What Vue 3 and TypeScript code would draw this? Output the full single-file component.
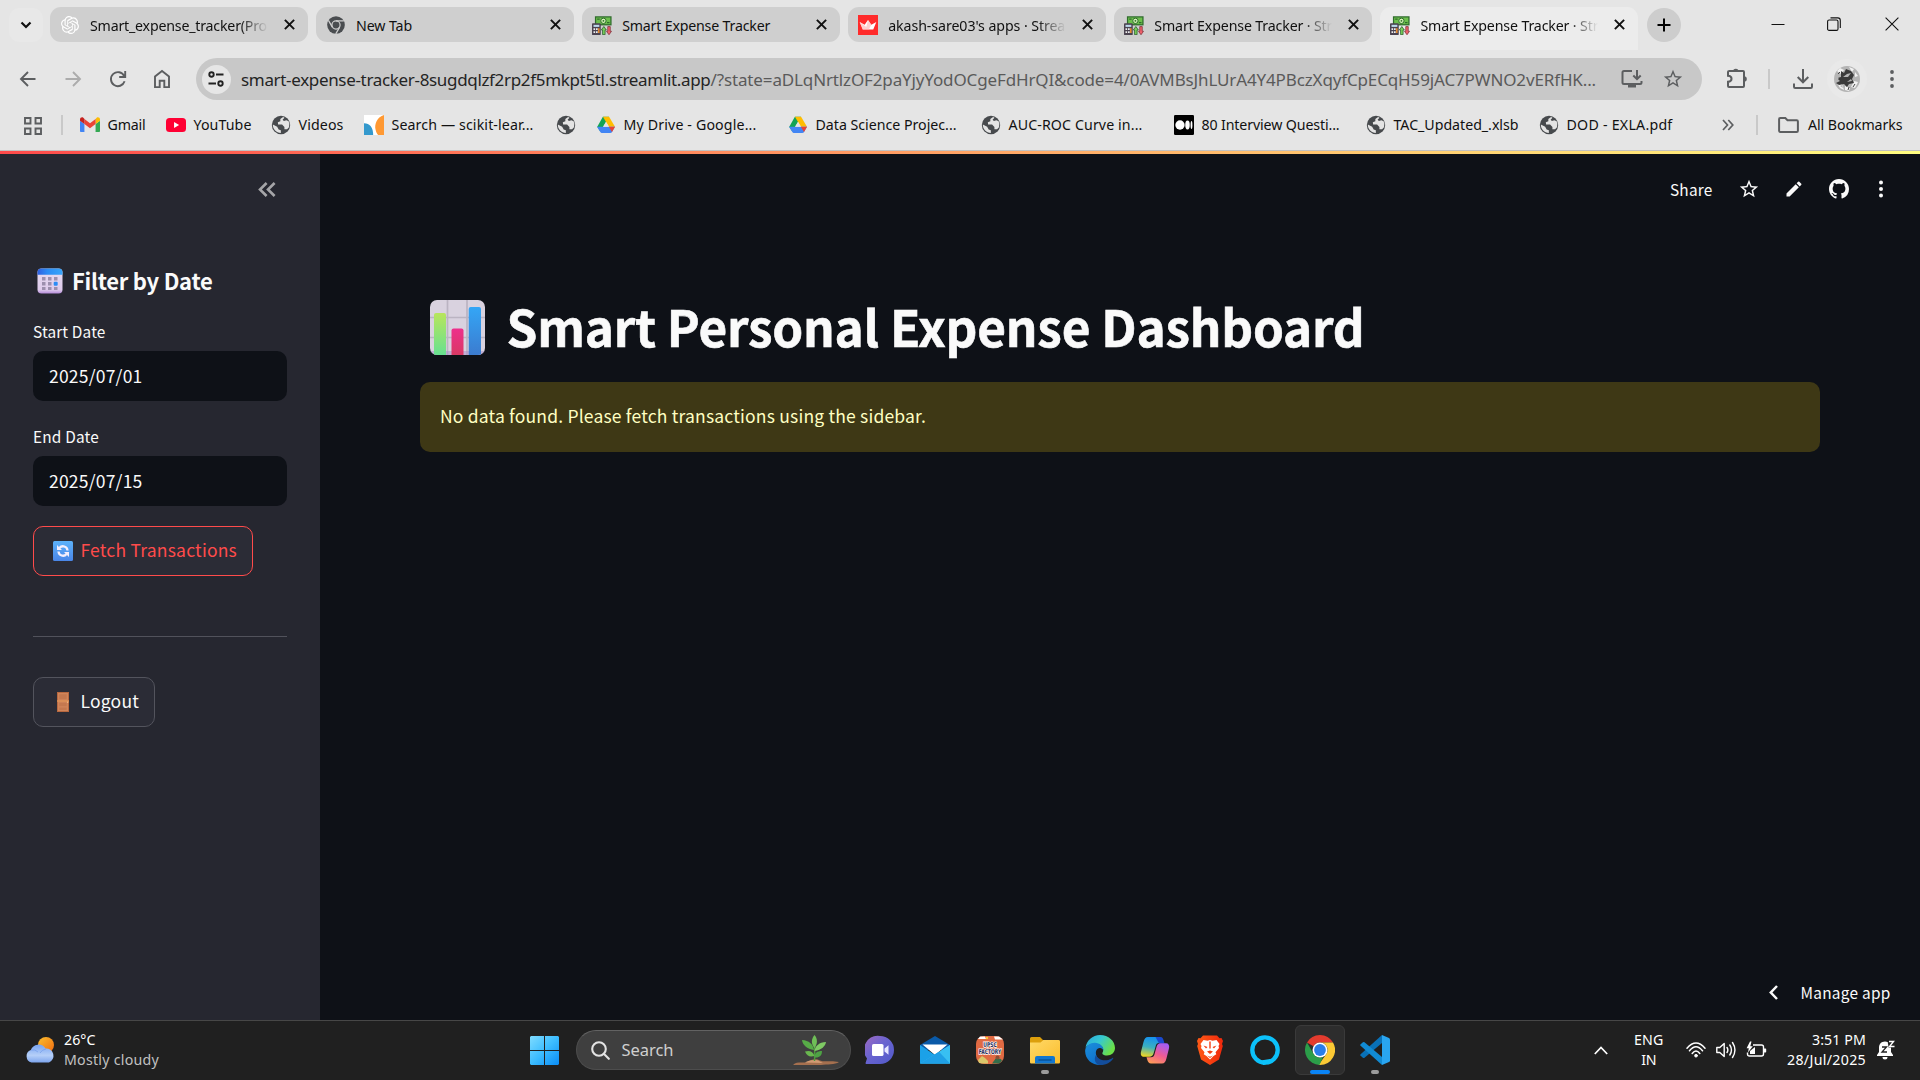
<script setup lang="ts">
interface Tab { icon: string; title: string; width: number; faded: boolean; active?: boolean }
interface Bookmark { icon: string; title: string; width: number; slot: number }
interface TaskApp { name: string; state?: 'open' | 'focused' }

/* Spreads a line of text over the given advance width. */
const vFit = {
  mounted(el: HTMLElement, binding: { value: number }) {
    const count = (el.textContent || '').length
    const natural = el.getBoundingClientRect().width
    if (count > 0) el.style.letterSpacing = `${((binding.value - natural) / count).toFixed(4)}px`
  },
}

const tabs: Tab[] = [
  { icon: 'openai', title: 'Smart_expense_tracker(Pro', width: 177, faded: true },
  { icon: 'chromeGrey', title: 'New Tab', width: 56, faded: false },
  { icon: 'money', title: 'Smart Expense Tracker', width: 148, faded: false },
  { icon: 'crown', title: "akash-sare03's apps · Strea", width: 177, faded: true },
  { icon: 'money', title: 'Smart Expense Tracker · Str', width: 178, faded: true },
  { icon: 'money', title: 'Smart Expense Tracker · Str', width: 178, faded: true, active: true },
]

const bookmarks: Bookmark[] = [
  { icon: 'gmail', title: 'Gmail', width: 38, slot: 86 },
  { icon: 'youtube', title: 'YouTube', width: 58, slot: 105 },
  { icon: 'globe', title: 'Videos', width: 45, slot: 93 },
  { icon: 'scikit', title: 'Search — scikit-lear...', width: 142, slot: 192 },
  { icon: 'globe', title: '', width: 0, slot: 40 },
  { icon: 'drive', title: 'My Drive - Google...', width: 133, slot: 192 },
  { icon: 'drive', title: 'Data Science Projec...', width: 141, slot: 193 },
  { icon: 'globe', title: 'AUC-ROC Curve in...', width: 134, slot: 193 },
  { icon: 'medium', title: '80 Interview Questi...', width: 138, slot: 192 },
  { icon: 'globe', title: 'TAC_Updated_.xlsb', width: 125, slot: 173 },
  { icon: 'globe', title: 'DOD - EXLA.pdf', width: 106, slot: 180 },
]

const apps: TaskApp[] = [
  { name: 'chat' }, { name: 'mail' }, { name: 'upsc' }, { name: 'folder', state: 'open' },
  { name: 'edge' }, { name: 'copilot' }, { name: 'brave' }, { name: 'alexa' },
  { name: 'chrome', state: 'focused' }, { name: 'vscode', state: 'open' },
]

const icons: Record<string, string> = {
  openai: '<path transform="translate(1.2 1.2) scale(.9)" fill="#fff" d="M22.2819 9.8211a5.9847 5.9847 0 0 0-.5157-4.9108 6.0462 6.0462 0 0 0-6.5098-2.9A6.0651 6.0651 0 0 0 4.9807 4.1818a5.9847 5.9847 0 0 0-3.9977 2.9 6.0462 6.0462 0 0 0 .7427 7.0966 5.98 5.98 0 0 0 .511 4.9107 6.051 6.051 0 0 0 6.5146 2.9001A5.9847 5.9847 0 0 0 13.2599 24a6.0557 6.0557 0 0 0 5.7718-4.2058 5.9894 5.9894 0 0 0 3.9977-2.9001 6.0557 6.0557 0 0 0-.7475-7.0729zm-9.022 12.6081a4.4755 4.4755 0 0 1-2.8764-1.0408l.1419-.0804 4.7783-2.7582a.7948.7948 0 0 0 .3927-.6813v-6.7369l2.02 1.1686a.071.071 0 0 1 .038.052v5.5826a4.504 4.504 0 0 1-4.4945 4.4944zm-9.6607-4.1254a4.4708 4.4708 0 0 1-.5346-3.0137l.142.0852 4.783 2.7582a.7712.7712 0 0 0 .7806 0l5.8428-3.3685v2.3324a.0804.0804 0 0 1-.0332.0615L9.74 19.9502a4.4992 4.4992 0 0 1-6.1408-1.6464zM2.3408 7.8956a4.485 4.485 0 0 1 2.3655-1.9728V11.6a.7664.7664 0 0 0 .3879.6765l5.8144 3.3543-2.0201 1.1685a.0757.0757 0 0 1-.071 0l-4.8303-2.7865A4.504 4.504 0 0 1 2.3408 7.872zm16.5963 3.8558L13.1038 8.364 15.1192 7.2a.0757.0757 0 0 1 .071 0l4.8303 2.7913a4.4944 4.4944 0 0 1-.6765 8.1042v-5.6772a.79.79 0 0 0-.407-.667zm2.0107-3.0231l-.142-.0852-4.7735-2.7818a.7759.7759 0 0 0-.7854 0L9.409 9.2297V6.8974a.0662.0662 0 0 1 .0284-.0615l4.8303-2.7866a4.4992 4.4992 0 0 1 6.6802 4.66zM8.3065 12.863l-2.02-1.1638a.0804.0804 0 0 1-.038-.0567V6.0742a4.4992 4.4992 0 0 1 7.3757-3.4537l-.142.0805L8.704 5.459a.7948.7948 0 0 0-.3927.6813zm1.0976-2.3654l2.602-1.4998 2.6069 1.4998v2.9994l-2.5974 1.4997-2.6067-1.4997Z"/>',
  chromeGrey: '<circle cx="12" cy="12" r="10.6" fill="#4a4d50"/><circle cx="12" cy="12" r="4.9" fill="#4a4d50" stroke="#cfcfcf" stroke-width="1.5"/><path d="M12 6.9h9.4M7.6 14.6L2.9 6.4M16.4 14.6l-4.7 8.1" stroke="#cfcfcf" stroke-width="1.5"/>',
  money: '<path d="M3.5 1.5h20v11h-20z" fill="#2f6b2c"/><path d="M5 3h17v8H5z" fill="#6cbf4c"/><path d="M6.2 4.2h3v1.5h-3zM18 8.5h3V10h-3z" fill="#2f6b2c"/><circle cx="13.7" cy="7" r="3.2" fill="#d5f5b5" stroke="#2f6b2c" stroke-width="1.2"/><circle cx="13.7" cy="7" r="1.1" fill="#2f6b2c"/><rect x="0" y="10" width="10.5" height="14" rx="1" fill="#4b4350"/><path d="M1.8 11.8h7v2.5h-7z" fill="#bcd7ea"/><path d="M1.8 16h2v2h-2zM4.8 16h2v2h-2zM1.8 19.5h2v2h-2zM4.8 19.5h2v2h-2z" fill="#eee"/><path d="M7.3 16h1.8v5.5H7.3z" fill="#f5912d"/><path d="M11.2 18l3-4.2 3 4.2h-1.5v5.6h-3V18z" fill="#79d05a" stroke="#27592a" stroke-width=".9"/><path d="M17.4 19.5l3 4.2 3-4.2h-1.5v-5.6h-3v5.6z" fill="#f0606a" stroke="#7c2f38" stroke-width=".9"/>',
  crown: '<path d="M0 0h24v24H0z" fill="#ff2b2b"/><path d="M2 8.5l6 3.2L12 6l4 5.7 6-3.2-3.7 8.8H5.7z" fill="#fff"/><path d="M12 6l4 5.7-3 5.6H5.7L2 8.5l8 6z" fill="#ffb8b8" opacity=".65"/>',
  gmail: '<path d="M1.4 20.5h3.9v-9.6L0 6.8v12.3c0 .8.6 1.4 1.4 1.4z" fill="#4285f4"/><path d="M18.7 20.5h3.9c.8 0 1.4-.6 1.4-1.4V6.8l-5.3 4.1z" fill="#34a853"/><path d="M18.7 4.9v6L24 6.8V5.2c0-2.1-2.3-3.2-4-2z" fill="#fbbc04"/><path d="M5.3 10.9v-6L12 9.8l6.7-4.9v6L12 16z" fill="#ea4335"/><path d="M0 5.2v1.6l5.3 4.1v-6L4 3.2C2.300 2 0 3.100 0 5.200z" fill="#c5221f"/>',
  youtube: '<rect x="0" y="3.500" width="24" height="17" rx="4.200" fill="#ff0033"/><path d="M9.700 8.500v7l6-3.500z" fill="#fff"/>',
  globe: '<circle cx="12" cy="12" r="11" fill="#474a4d"/><path d="M14.500 2.300l-3.300 2.500v2.600l-3 1.200.3 2.700h4.800l2.800 3.200v2.500h3.200l2.300-2.300a10 10 0 0 0-.4-7.100l-2.800-1.400-2.900.9-1.600-1.500 2.300-2.200z" fill="#e4e4e4"/><path d="M2.200 11.500l5.200 2.600 1.800 3.300 2.600.8v3.300C6.500 21.500 2.200 17.500 2.200 11.500z" fill="#e4e4e4"/>',
  scikit: '<path d="M0 0h24v24H0z" fill="#fff"/><path d="M0 10c7 0 11 5 11 14H0z" fill="#3499cd"/><path d="M24 0C16 2 12 11 14 18c.5 2.600 1.500 4.500 3 6h7z" fill="#ff9933"/>',
  drive: '<path d="M8.300 2h7.400L8.900 13.700 5.200 20 1.500 14z" fill="#12a454"/><path d="M15.700 2l7.100 12.200h-7.400L8.300 2z" fill="#ffbd00"/><path d="M5.200 20.500L1.200 14.200h21.600l-3.600 6.300c-.5.800-1 1-1.800 1H7c-.8 0-1.400-.3-1.800-1z" fill="#4285f4"/><path d="M12 8.200l-3.600 6h7.200z" fill="#e4e4e4"/><path d="M15.400 14.200h7.400l-3.600 6.300z" fill="#ea4335"/>',
  medium: '<rect width="24" height="24" rx="1.500" fill="#000"/><circle cx="7.200" cy="12" r="5.600" fill="#fff"/><ellipse cx="16.200" cy="12" rx="2.700" ry="5.300" fill="#fff"/><ellipse cx="21" cy="12" rx="1.100" ry="4.700" fill="#fff"/>',
  chat: '<defs><linearGradient id="chatG" x1="0" y1="0" x2="1" y2="1"><stop offset="0" stop-color="#a06ac0"/><stop offset=".45" stop-color="#6a64d0"/><stop offset="1" stop-color="#5059c9"/></linearGradient></defs><path d="M15 1a14 14 0 0 1 0 28H1.500c-1 0-1.200-.8-.8-1.600L2 23.500A14 14 0 0 1 15 1z" fill="url(#chatG)"/><rect x="7" y="9" width="11.500" height="12" rx="1.600" fill="#fff"/><path d="M19.500 13.500l4-3.300v9.600l-4-3.300z" fill="#e6e6ff"/>',
  mail: '<path d="M0 10L15 1l15 9v5H0z" fill="#0a5aa8"/><path d="M2.500 9.500h25L15 20z" fill="#fff"/><path d="M0 10l15 10 15-10v18.500H0z" fill="#1ba1e8"/><path d="M0 28.500L30 10v18.500z" fill="#38bff2"/><path d="M0 28.500l19-11.700 11 11.700z" fill="#1f9fe6"/>',
  upsc: '<rect x="1" y="1" width="28" height="28" rx="8" fill="#e06a43"/><path d="M5 1.500h5l1 2.500H3zM19 1.500h5l4 3h-8z" fill="#fff"/><circle cx="12" cy="3" r="1.200" fill="#ffc93c"/><text x="15" y="11.500" font-size="6.500" font-weight="700" text-anchor="middle" font-family="DejaVu Sans, sans-serif" fill="#232b5a" stroke="#fff" stroke-width="1.500" paint-order="stroke" textLength="13.500" lengthAdjust="spacingAndGlyphs">UPSC</text><text x="15" y="19" font-size="6.500" font-weight="700" text-anchor="middle" font-family="DejaVu Sans, sans-serif" fill="#232b5a" stroke="#fff" stroke-width="1.500" paint-order="stroke" textLength="22.500" lengthAdjust="spacingAndGlyphs">FACTORY</text><path d="M4 28l-1-3 4-4 3 2 3 3v2.500H7z" fill="#d9c76b"/><path d="M17 28.500l4-5.500 5 1 1 2-3 2.500z" fill="#336d4b"/><circle cx="22.500" cy="22.500" r="2" fill="#8b4f35"/>',
  folder: '<defs><linearGradient id="fdG" x1="0" y1="0" x2="1" y2="1"><stop offset="0" stop-color="#ffd968"/><stop offset="1" stop-color="#fbbd2c"/></linearGradient></defs><path d="M0 3.500Q0 2 1.500 2H10l3 3h15.500Q30 5 30 6.500V12H0z" fill="#dd9f0c"/><path d="M0 7.500h10.500l3-2.500H28.500Q30 5 30 6.500v20.800q0 1.200-1.200 1.200H1.200Q0 28.500 0 27.300z" fill="url(#fdG)"/><path d="M5 28.500V23q0-2 2-2h16q2 0 2 2v5.500z" fill="#1376cf"/><path d="M9 25h12" stroke="#08549c" stroke-width="1.500" stroke-linecap="round"/>',
  edge: '<defs><linearGradient id="edA" x1="0" y1="0" x2="1" y2=".5"><stop offset="0" stop-color="#2aa7df"/><stop offset=".5" stop-color="#36c8d0"/><stop offset="1" stop-color="#6be048"/></linearGradient><linearGradient id="edB" x1="0" y1="0" x2=".7" y2="1"><stop offset="0" stop-color="#1b8fdc"/><stop offset="1" stop-color="#0d6cc9"/></linearGradient></defs><path d="M.5 13C1.500 5.500 7.500 0 15 0c8.600 0 15 6 15 13 0 4.500-3.500 7.500-8 7.500-4 0-5.300-1.700-4.300-3.200 1.300-2 .7-7.300-5.700-8.300C7 8.300 2 10 .5 13z" fill="url(#edA)"/><path d="M.2 15C.8 10.500 5.500 7.500 10 7.700c5 .2 9 3.800 8.300 7.800-.4-1.700-2-2.800-3.800-2.500-3 .5-4.500 3.600-3.200 7.500 1.500 4.300 6.500 7 12 5.800C20.500 29 17.500 30 15 30 6.500 30-.5 23.500.2 15z" fill="url(#edB)"/><path d="M11 19.800c1.200 4 6 6 10.500 5.400 2.700-.4 4.500-1.500 6-2.300.6-.3 1 .2.600.8C25.500 27.500 20.500 30.200 15 30c-5-.4-6.500-6.500-4-10.200z" fill="#134d9b"/>',
  copilot: '<defs><linearGradient id="cpA" x1=".4" y1="0" x2=".2" y2="1"><stop offset="0" stop-color="#1692ed"/><stop offset=".5" stop-color="#3bb0c0"/><stop offset="1" stop-color="#f5d820"/></linearGradient><linearGradient id="cpB" x1=".7" y1="0" x2=".2" y2="1"><stop offset="0" stop-color="#a45cf5"/><stop offset=".5" stop-color="#ee5b93"/><stop offset="1" stop-color="#ff9d55"/></linearGradient></defs><path d="M8 2h11c2 0 3 1.500 3.500 3l1 3H19c-2 0-2.800 1-3.300 3l-2 7c-.8 2.500-2 3.700-4.300 3.700H4c-2.500 0-3.700-2-3-5L3.500 7C4.500 3.500 5.500 2 8 2z" fill="url(#cpA)"/><path d="M14 2h6.500c2 0 2.500 1.500 3 3l1 3.500H19L15.500 2z" fill="#1a49cf"/><path d="M22 28.500H11c-2 0-3-1.500-3.500-3l-1-3.300H11c2.200 0 3-1.200 3.500-3l2-7.200C17.300 9.500 18.300 8.300 20.600 8.300H26c2.500 0 3.700 2 3 5l-2.500 10c-1 3.700-2 5.200-4.500 5.200z" fill="url(#cpB)"/>',
  brave: '<defs><linearGradient id="brG"><stop offset="0" stop-color="#ff5a16"/><stop offset="1" stop-color="#f0280c"/></linearGradient></defs><path d="M8 .5h14l2.500 2.700 2-.2L28 6l-1 3 .8 2L24 24.500 15 30 6 24.500 2.200 11 3 9 2 6l1.500-3 2 .2z" fill="url(#brG)"/><path d="M8.500 5l4 .8 2.500-.8 2.500.8 4-.8 3 4-1 2 .5 2-3.500 4.300.8 2-2.800 1.700L15 24.500 11.500 21l-2.800-1.700.8-2L6 13l.5-2-1-2z" fill="#fff"/><path d="M8.500 10.500l4 1.500-1.500 1.500zM21.500 10.500l-4 1.500 1.500 1.500zM12 16.500l3-1 3 1-3 2.500zM14.300 6.500h1.400v7h-1.400z" fill="#f63e12"/><path d="M12 20.500l3 1.200 3-1.200-3 2.500z" fill="#f63e12"/>',
  alexa: '<circle cx="15" cy="15" r="12.700" fill="none" stroke="#0cc1fa" stroke-width="4.300"/><path d="M12.300 25.200q1 .8.700 2v2.800h1q5.500-2 8.500-5l-2.500-1z" fill="#0cc1fa"/><path d="M6 25.300q4 1.700 6.500 2.200v2.300z" fill="#0cc1fa"/>',
  chrome: '<path d="M15 0c5.600 0 10.400 3 13 7.500H15a7.500 7.500 0 0 0-6.500 3.700L2 7.500A15 15 0 0 1 15 0z" fill="#e33b2e"/><path d="M28 7.500A15 15 0 0 1 15 30l-1.500-.1 8-11.100A7.500 7.500 0 0 0 15 7.500z" fill="#fcc934"/><path d="M2 7.500l6.500 11.300A7.500 7.500 0 0 0 18 21.900L14.500 30A15 15 0 0 1 2 7.500z" fill="#2b9e49"/><circle cx="15" cy="15" r="7.500" fill="#fff"/><circle cx="15" cy="15" r="5.900" fill="#2a7de9"/>',
  vscode: '<path d="M22 0l7 3q1 .5 1 1.500V25.500q0 1-1 1.500l-7 3z" fill="#29a5f0"/><path d="M22 0v8L4.500 22.700q-.8.600-1.600 0L.6 20.800q-.8-.8 0-1.600z" fill="#0971b8"/><path d="M22 30v-8L4.500 7.300q-.8-.6-1.600 0L.6 9.200q-.8.800 0 1.600z" fill="#118bd4"/>',
}
</script>

<template>
  <div class="screen">
    <header class="browser">
      <div class="strip">
        <div class="tab-menu"><svg width="12" height="12" viewBox="0 0 12 12"><path d="M1.500 3.500L6 8l4.500-4.500" fill="none" stroke="#111" stroke-width="2.200"/></svg></div>
        <div class="tabs">
          <div v-for="(t, i) in tabs" :key="i" class="tab" :class="{ active: t.active }">
            <svg class="fav" viewBox="0 0 24 24" v-html="icons[t.icon]"></svg>
            <div class="tab-title" :class="{ faded: t.faded }"><span v-fit="t.width">{{ t.title }}</span></div>
            <svg class="tab-close" viewBox="0 0 10 10"><path d="M.8.8l8.400 8.400M9.200.8L.8 9.200" stroke="#111" stroke-width="1.800"/></svg>
          </div>
        </div>
        <div class="new-tab"><svg width="14" height="14" viewBox="0 0 14 14"><path d="M7 .5v13M.5 7h13" stroke="#000" stroke-width="2"/></svg></div>
        <div class="win">
          <svg width="14" height="14" viewBox="0 0 14 14"><path d="M.5 7.500h13" stroke="#111"/></svg>
          <svg width="14" height="14" viewBox="0 0 14 14" fill="none" stroke="#111" stroke-width="1.100"><rect x=".6" y="3" width="10.400" height="10.400" rx="1.500"/><path d="M3.500.9h7.300a2.500 2.500 0 0 1 2.500 2.500v7.500"/></svg>
          <svg width="14" height="14" viewBox="0 0 14 14"><path d="M.6.6l12.800 12.800M13.400.6L.6 13.400" stroke="#111" stroke-width="1.100"/></svg>
        </div>
      </div>

      <div class="toolbar">
        <div class="nav">
          <svg width="20" height="20" viewBox="0 0 20 20" fill="none" stroke="#5c5e60" stroke-width="1.900"><path d="M17.500 10H4M10 3l-7 7 7 7"/></svg>
          <svg width="20" height="20" viewBox="0 0 20 20" fill="none" stroke="#acacac" stroke-width="1.900"><path d="M2.500 10H16M10 3l7 7-7 7"/></svg>
          <svg width="20" height="20" viewBox="0 0 20 20" fill="none" stroke="#5c5e60" stroke-width="1.900"><path d="M16.600 12.300A7 7 0 1 1 16.200 7M17.200 2v6h-6"/></svg>
          <svg width="20" height="20" viewBox="0 0 20 20" fill="none" stroke="#5c5e60" stroke-width="1.900"><path d="M3 18.100V7.500L10 2l7 5.500v10.600h-4.700v-6.300H7.700v6.300z"/></svg>
        </div>
        <div class="omnibox">
          <div class="site"><svg width="18" height="18" viewBox="0 0 18 18" fill="none" stroke="#222" stroke-width="1.900"><circle cx="4.500" cy="4.500" r="2.200"/><path d="M9 4.500h7.500M1.500 13.500H9"/><circle cx="13.500" cy="13.500" r="2.200"/></svg></div>
          <div class="url"><span v-fit="469.500" class="host">smart-expense-tracker-8sugdqlzf2rp2f5mkpt5tl.streamlit.app</span><span v-fit="885.500" class="path">/?state=aDLqNrtlzOF2paYjyYodOCgeFdHrQI&amp;code=4/0AVMBsJhLUrA4Y4PBczXqyfCpECqH59jAC7PWNO2vERfHK...</span></div>
          <svg class="install" width="22" height="20" viewBox="0 0 22 20" fill="none" stroke="#5c5e60" stroke-width="2"><path d="M11 2H3a1.500 1.500 0 0 0-1.500 1.500v10A1.500 1.500 0 0 0 3 15h16a1.500 1.500 0 0 0 1.500-1.500V12M16 1v9M12.300 6.500L16 10.200l3.700-3.700"/><path d="M7 15h8v3.500H7z" fill="#5c5e60" stroke="none"/></svg>
          <svg class="fav-star" width="22" height="22" viewBox="0 0 24 24"><path fill="#5c5e60" d="M22 9.240l-7.190-.62L12 2 9.190 8.630 2 9.240l5.460 4.730L5.820 21 12 17.270 18.180 21l-1.630-7.030L22 9.240zM12 15.400l-3.760 2.270 1-4.280-3.320-2.880 4.380-.38L12 6.100l1.710 4.040 4.380.38-3.320 2.880 1 4.280L12 15.400z"/></svg>
        </div>
        <div class="tools">
          <svg class="puzzle" width="22" height="22" viewBox="0 0 22 22"><path d="M2.500 4h5M12.500 4H17a1 1 0 0 1 1 1v14a1 1 0 0 1-1 1H3a1 1 0 0 1-1-1v-4.300c4.700-.3 4.700-5.700 0-6V5a1 1 0 0 1 1-1z" fill="none" stroke="#5c5e60" stroke-width="2"/><path d="M7 4.500a2.800 2.800 0 0 1 5.600 0zM18 9.200a2.800 2.800 0 0 1 0 5.600z" fill="#5c5e60"/></svg>
          <i class="vr"></i>
          <svg class="download" width="20" height="20" viewBox="0 0 20 20" fill="none" stroke="#5c5e60" stroke-width="2"><path d="M10 0v13M4.700 8L10 13.300 15.300 8M1 14.500v3.300a1.200 1.200 0 0 0 1.200 1.200h15.600a1.200 1.200 0 0 0 1.200-1.200v-3.300"/></svg>
          <div class="avatar"><svg width="26" height="26" viewBox="0 0 26 26"><circle cx="13" cy="13" r="13" fill="#b4b4b4"/><path d="M3 5l3-3 4 2-3 4zM15 1l5 2-2 3zM20 15l4 1-3 6-4-1zM3 17l5 1 2 6-4-2zM11 20l5 2-1 3-4-1zM21 6l3 4-3 1z" fill="#f2f2f2"/><path d="M7 5l3 2 2-4 5 2 3 4-2 4 2 4-5 1-2 3-3-3-5 1-3-2 4-2-3-3 4-1z" fill="#3a3a3a"/><path d="M9 11l4-3 4-1-3 4zM13 16l4-3 1 2zM2 10l3 2-2 2zM6 20l2-1 1 3z" fill="#b5b5b5"/><path d="M4 8l2-2M19 21l2-3M14 24l1-3" stroke="#444" stroke-width="1"/></svg></div>
          <svg class="dots" width="4" height="20" viewBox="0 0 4 20" fill="#5c5e60"><circle cx="2" cy="3" r="1.900"/><circle cx="2" cy="10" r="1.900"/><circle cx="2" cy="17" r="1.900"/></svg>
        </div>
      </div>

      <div class="bookbar">
        <svg class="grid" width="18" height="18" viewBox="0 0 18 18" fill="none" stroke="#5c5e60" stroke-width="1.900"><path d="M1 1h5.500v5.500H1zM11.500 1H17v5.500h-5.500zM1 11.500h5.500V17H1zM11.500 11.500H17V17h-5.500z"/></svg>
        <i class="vr"></i>
        <div class="marks">
          <div v-for="(b, i) in bookmarks" :key="i" class="mark" :style="{ width: b.slot + 'px' }">
            <svg width="20" height="20" viewBox="0 0 24 24" v-html="icons[b.icon]"></svg>
            <span v-if="b.title" v-fit="b.width">{{ b.title }}</span>
          </div>
        </div>
        <svg class="more" width="12" height="12" viewBox="0 0 12 12" fill="none" stroke="#5c5e60" stroke-width="1.700"><path d="M1 1l4.500 5L1 11M6.300 1l4.500 5-4.500 5"/></svg>
        <i class="vr second"></i>
        <svg class="all-icon" width="21" height="16" viewBox="0 0 21 16" fill="none" stroke="#5c5e60" stroke-width="2"><path d="M1.100 2.300q0-1.200 1.200-1.200h5l2.200 2.200h9.200q1.200 0 1.200 1.200v9.200q0 1.200-1.200 1.200H2.300q-1.200 0-1.200-1.200z"/></svg>
        <span v-fit="94.500" class="all">All Bookmarks</span>
      </div>
    </header>

    <div class="rainbow"></div>

    <main class="app">
      <aside class="sidebar">
        <svg class="collapse" width="18" height="15" viewBox="0 0 18 15" fill="none" stroke="#a5a5a8" stroke-width="2.600"><path d="M8.600 1L2 7.500 8.600 14M16.600 1L10 7.500l6.600 6.500"/></svg>
        <h3>
          <svg width="26" height="26" viewBox="0 0 26 26"><defs><linearGradient id="calTop"><stop offset="0" stop-color="#2f5fe0"/><stop offset=".4" stop-color="#2b8cf5"/><stop offset="1" stop-color="#38a5fa"/></linearGradient><linearGradient id="calBody" x1="0" y1="0" x2="0" y2="1"><stop offset="0" stop-color="#e6dcf0"/><stop offset=".85" stop-color="#decbec"/><stop offset="1" stop-color="#b48ad8"/></linearGradient></defs><rect x=".5" y=".5" width="25" height="25" rx="4" fill="url(#calBody)"/><path d="M.5 6.700V4.500a4 4 0 0 1 4-4h17a4 4 0 0 1 4 4v2.200z" fill="url(#calTop)"/><path d="M5 9h3.500v3.500H5zM11 9h3.500v3.500H11zM17 9h3.500v3.500H17zM5 14h3.500v3.500H5zM11 14h3.500v3.500H11zM5 19h3.500v3H5zM11 19h3.500v3H11zM17 19h3.500v3H17z" fill="#9c8fae"/><rect x="16.700" y="13.700" width="4" height="4" rx="1" fill="#2b8cf5"/></svg>
          <span v-fit="140.500">Filter by Date</span>
        </h3>
        <label><span v-fit="72.500">Start Date</span></label>
        <div class="field"><span v-fit="93.500">2025/07/01</span></div>
        <label class="second"><span v-fit="66">End Date</span></label>
        <div class="field"><span v-fit="93.500">2025/07/15</span></div>
        <button class="fetch">
          <svg width="20" height="20" viewBox="0 0 20 20"><defs><linearGradient id="syncG" x1="0" y1="0" x2="0" y2="1"><stop offset="0" stop-color="#5db2fa"/><stop offset="1" stop-color="#4a86e8"/></linearGradient></defs><rect width="20" height="20" rx="1.500" fill="url(#syncG)"/><path d="M5.500 10.500A4.500 4.500 0 0 0 13.500 13M14.500 9.500A4.500 4.500 0 0 0 6.500 7" fill="none" stroke="#f4eefc" stroke-width="2.300"/><path d="M4 4v5h5zM16 16v-5h-5z" fill="#f4eefc"/></svg>
          <span v-fit="156.500">Fetch Transactions</span>
        </button>
        <hr>
        <button class="logout">
          <svg width="20" height="20" viewBox="0 0 20 20"><path d="M4 0h12v20H4z" fill="#b8683f"/><path d="M5 1h10v18H5z" fill="#d0855a"/><path d="M6.300 2.300h7.400v5H6.300zM6.300 10.700h7.400v3.500H6.300zM6.300 15.500h7.400v2.500H6.300z" fill="#c4784f"/><path d="M4 8.300h12v1.400H4z" fill="#de9257"/><path d="M14 9.500h1.300v1.500H14z" fill="#f3b27a"/></svg>
          <span v-fit="58.500">Logout</span>
        </button>
      </aside>

      <section class="content">
        <div class="actions">
          <span v-fit="42.500">Share</span>
          <svg class="a-star" width="22" height="22" viewBox="0 0 24 24"><path fill="#fafafa" d="M22 9.240l-7.190-.62L12 2 9.190 8.630 2 9.240l5.460 4.730L5.820 21 12 17.270 18.180 21l-1.630-7.030L22 9.240zM12 15.400l-3.760 2.270 1-4.280-3.320-2.880 4.380-.38L12 6.100l1.710 4.040 4.380.38-3.320 2.880 1 4.280L12 15.400z"/></svg>
          <svg class="a-pen" width="20" height="20" viewBox="0 0 24 24"><path fill="#fafafa" d="M3 17.250V21h3.750L17.810 9.940l-3.750-3.750L3 17.250zM20.710 7.040a1 1 0 000-1.410l-2.340-2.340a1 1 0 00-1.410 0l-1.830 1.830 3.750 3.750 1.830-1.830z"/></svg>
          <svg class="a-git" width="20" height="20" viewBox="0 0 16 16"><path fill="#fafafa" d="M8 0C3.580 0 0 3.580 0 8c0 3.540 2.290 6.530 5.470 7.590.4.070.55-.17.55-.38 0-.19-.01-.82-.01-1.490-2.010.37-2.530-.49-2.690-.94-.09-.23-.48-.94-.82-1.130-.28-.15-.68-.52-.01-.53.63-.01 1.080.58 1.230.82.72 1.210 1.870.87 2.330.66.07-.52.28-.87.51-1.070-1.780-.2-3.640-.89-3.640-3.950 0-.87.31-1.590.82-2.150-.08-.2-.36-1.020.08-2.120 0 0 .67-.21 2.200.82.64-.18 1.320-.27 2-.27s1.360.09 2 .27c1.530-1.040 2.200-.82 2.200-.82.44 1.100.16 1.920.08 2.120.51.56.82 1.270.82 2.150 0 3.070-1.870 3.750-3.650 3.950.29.25.54.73.54 1.480 0 1.070-.01 1.930-.01 2.200 0 .21.15.46.55.38A8.010 8.010 0 0016 8c0-4.420-3.580-8-8-8z"/></svg>
          <svg class="a-dots" width="4" height="18" viewBox="0 0 4 18" fill="#fafafa"><circle cx="2" cy="2.500" r="2"/><circle cx="2" cy="9" r="2"/><circle cx="2" cy="15.500" r="2"/></svg>
        </div>
        <h1>
          <svg width="55" height="55" viewBox="0 0 55 55"><defs><linearGradient id="cbG" x1="0" y1="0" x2="0" y2="1"><stop offset="0" stop-color="#b8e55c"/><stop offset="1" stop-color="#5fe096"/></linearGradient><linearGradient id="cbR" x1="0" y1="0" x2="0" y2="1"><stop offset="0" stop-color="#ee2f8c"/><stop offset="1" stop-color="#d63a5e"/></linearGradient><linearGradient id="cbB" x1="0" y1="0" x2="0" y2="1"><stop offset="0" stop-color="#34a6f6"/><stop offset="1" stop-color="#3c78cc"/></linearGradient><clipPath id="cbC"><rect width="55" height="55" rx="7"/></clipPath></defs><g clip-path="url(#cbC)"><path d="M0 0h55v55H0z" fill="#d9d2df"/><path d="M17.500 0v55M37 0v55M0 17.500h55M0 37.500h55" stroke="#bbb4c2" stroke-width="1.700"/><path d="M0 51h55v4H0z" fill="#a88cc9" opacity=".5"/><rect x="4" y="13" width="12" height="46" rx="2" fill="url(#cbG)"/><rect x="21.500" y="28.500" width="12" height="30" rx="2" fill="url(#cbR)"/><rect x="38.700" y="7" width="12.300" height="52" rx="2" fill="url(#cbB)"/></g></svg>
          <span v-fit="858">Smart Personal Expense Dashboard</span>
        </h1>
        <div class="alert"><span v-fit="486">No data found. Please fetch transactions using the sidebar.</span></div>
        <div class="manage">
          <svg width="9" height="15" viewBox="0 0 9 15" fill="none" stroke="#fafafa" stroke-width="2.500"><path d="M8 1L1.800 7.500 8 14"/></svg>
          <span v-fit="90">Manage app</span>
        </div>
      </section>
    </main>

    <footer class="taskbar">
      <div class="weather">
        <svg width="30" height="26" viewBox="0 0 30 26"><defs><linearGradient id="sunG" x1="0" y1="0" x2="1" y2="1"><stop offset="0" stop-color="#fbc02f"/><stop offset="1" stop-color="#f0690f"/></linearGradient><linearGradient id="cloG" x1="0" y1="0" x2="0" y2="1"><stop offset="0" stop-color="#78a4f2"/><stop offset=".6" stop-color="#b5cff8"/><stop offset="1" stop-color="#7da5ee"/></linearGradient></defs><circle cx="21" cy="8" r="8" fill="url(#sunG)"/><path d="M6.500 25.500a6.500 6.500 0 0 1-.7-12.400A8.200 8.200 0 0 1 20.500 11.500 7.300 7.300 0 0 1 24 25.500z" fill="url(#cloG)"/><path d="M6 13q4-1 7 2M21 12q-4 .5-6 4" stroke="#6e98e8" fill="none" opacity=".6"/></svg>
        <div class="lines left"><span v-fit="31.500">26°C</span><span v-fit="95" class="dim">Mostly cloudy</span></div>
      </div>
      <div class="center">
        <svg class="start" width="29" height="29" viewBox="0 0 29 29"><defs><linearGradient id="winG" gradientUnits="userSpaceOnUse" x1="0" y1="0" x2="29" y2="29"><stop offset="0" stop-color="#7fdcff"/><stop offset=".5" stop-color="#3cbcff"/><stop offset="1" stop-color="#0a8cf5"/></linearGradient></defs><path d="M1 0h13v14H0V1zM15 0h13l1 1v13H15zM0 15h14v14H1l-1-1zM15 15h14v13l-1 1H15z" fill="url(#winG)"/></svg>
        <div class="search">
          <svg width="19" height="19" viewBox="0 0 19 19" fill="none" stroke="#e3e3e3" stroke-width="2.100"><circle cx="8" cy="8" r="6.800"/><path d="M12.800 12.800l5 5" stroke-linecap="round"/></svg>
          <span v-fit="52">Search</span>
          <svg class="plant" width="46" height="32" viewBox="0 0 46 32"><path d="M0 31c4-4 10-1.500 14-3 4-2.500 9-4 13-1.500 5 2 10-.5 19 1.500-4 3-12 2-18 3z" fill="#a5704f"/><path d="M12 28.500c4-2.500 11-3.500 15-1l3 1.500z" fill="#d29b74"/><path d="M21.500 27c.5-7 0-14 0-20" stroke="#4e9a3e" stroke-width="1.500" fill="none"/><path d="M21.500 1c-3.500 4-3.500 9 0 13 3-4 3.500-9 0-13z" fill="#6fbe57"/><path d="M9 6c.5 5 5 9 12 10-1-6-5-9.500-12-10z" fill="#57ab47"/><path d="M33 8c-.5 4-4.500 8-11.500 9C22.500 11.500 26 8.500 33 8z" fill="#7fca64"/><path d="M12 17.500c2 5 5 5.500 9.500 4.500-1.500-4.500-5-6-9.500-4.500z" fill="#69b74f"/><path d="M29 17c-5 0-7.500 2-7.500 6.500 5 .5 7.500-2 7.500-6.500z" fill="#4ea244"/></svg>
        </div>
        <div class="apps">
          <div v-for="a in apps" :key="a.name" class="task" :class="a.state">
            <svg width="30" height="30" viewBox="0 0 30 30" v-html="icons[a.name]"></svg>
            <i v-if="a.state" class="pill"></i>
          </div>
        </div>
      </div>
      <div class="tray">
        <svg class="t-up" width="14" height="9" viewBox="0 0 14 9" fill="none" stroke="#fff" stroke-width="1.700"><path d="M.8 8L7 1.500 13.200 8"/></svg>
        <div class="lines mid lang"><span v-fit="29.500">ENG</span><span v-fit="15">IN</span></div>
        <svg class="t-wifi" width="20" height="16" viewBox="0 0 20 16" fill="none" stroke="#fff" stroke-width="1.500" stroke-linecap="round"><path d="M1 6.200Q10-4 19 6.200M3.500 8.800Q10 .8 16.500 8.800M6.200 11.500Q10 6.500 13.800 11.500"/><circle cx="10" cy="13.700" r="1.400" fill="#fff" stroke-width=".8"/></svg>
        <svg class="t-vol" width="20" height="18" viewBox="0 0 20 18" fill="none" stroke="#fff" stroke-width="1.400" stroke-linecap="round" stroke-linejoin="round"><path d="M.8 6.500h3L8.200 2.500v13L3.800 11.500h-3zM11 6.500q1.700 2.500 0 5M13.800 4q3.300 5 0 10M16.500 1.500q4.900 7.500 0 15"/></svg>
        <svg class="t-bat" width="21" height="18" viewBox="0 0 21 18" fill="none" stroke="#fff" stroke-width="1.400"><path d="M7 4h8.500Q17.500 4 17.500 6v7q0 2-2 2H3.500q-2 0-2-2v-1.500"/><path d="M18 7.500h1.500q.7 0 .7.700v2.600q0 .7-.7.700H18zM4 13V10l5-4v7z" fill="#fff" stroke="none"/><path d="M4 .5L.6 7.200h2.200L2 11.500l4.800-6.200H4.300L5.500.5z" fill="#fff" stroke="none"/></svg>
        <div class="lines right clock"><span v-fit="54">3:51 PM</span><span v-fit="79">28/Jul/2025</span></div>
        <svg class="t-bell" width="18" height="20" viewBox="0 0 18 20"><path d="M8 1.500c4 0 6 2.800 6 6V12l2 3v1H0v-1l2-3V7.500c0-3.200 2-6 6-6zM5.500 17h5a2.500 2.500 0 0 1-5 0z" fill="#fff"/><path d="M5 7h4.500L5 12h5" stroke="#222" stroke-width="1.300" fill="none"/><path d="M10.500 0H18v7.500h-6.500z" fill="#212121"/><path d="M12 1.500h4.500L12.500 6.500H17.500" stroke="#fff" stroke-width="1.400" fill="none"/></svg>
      </div>
    </footer>
  </div>
</template>

<style>
body { margin: 0; overflow: hidden; background: #0e1117; }
</style>

<style scoped>
.screen { width: 1920px; height: 1080px; display: flex; flex-direction: column; overflow: hidden; font-family: "Noto Sans", "Open Sans", sans-serif; font-size: 14.200px; color: #111; white-space: nowrap; }
svg { display: block; flex: none; }
span { display: inline-block; flex: none; }
.browser { height: 150px; background: #e5e5e5; border-bottom: 1px solid #c2c2c2; flex: none; }
.vr { display: block; width: 2px; height: 20px; background: #c9c9c9; flex: none; }

.strip { height: 50px; display: flex; align-items: flex-start; padding-top: 7px; box-sizing: border-box; }
.tab-menu { width: 34px; height: 34px; margin: 1px 7px 0 9px; border-radius: 10px; background: #e8e8e8; display: flex; align-items: center; justify-content: center; flex: none; }
.tabs { display: flex; gap: 8px; width: 1588.500px; flex: none; }
.tab { flex: 1; min-width: 0; height: 35px; border-radius: 11px; background: #cfcfcf; display: flex; align-items: center; padding-left: 10px; box-sizing: border-box; }
.tab.active { background: #ececec; height: 43px; padding-bottom: 8px; border-radius: 11px 11px 0 0; }
.fav { width: 20px; height: 20px; margin-right: 10px; }
.tab-title { width: 178px; overflow: hidden; line-height: 24px; padding-top: 2px; flex: none; }
.tab-title.faded { mask-image: linear-gradient(90deg, #000 84%, transparent 100%); }
.tab-close { width: 11px; height: 11px; margin-left: 15.500px; }
.new-tab { width: 34px; height: 34px; margin: 1px 0 0 8px; border-radius: 50%; background: #cdcdcd; display: flex; align-items: center; justify-content: center; flex: none; }
.win { display: flex; gap: 42.500px; margin: 10px 0 0 90px; }
.win svg:last-child { margin-left: 1px; }

.toolbar { height: 50px; display: flex; align-items: center; padding-top: 8px; box-sizing: border-box; background: #e6e6e6; }
.nav { display: flex; gap: 24.800px; width: 177.500px; padding-left: 18px; flex: none; }
.omnibox { width: 1506px; height: 42px; border-radius: 21px; background: #c8c8c8; display: flex; align-items: center; flex: none; }
.site { width: 29px; height: 29px; margin: 0 10.500px 0 6px; border-radius: 50%; background: #e6e6e6; display: flex; align-items: center; justify-content: center; flex: none; }
.url { font-size: 17px; line-height: 28px; width: 1360px; display: flex; padding-top: 1px; flex: none; }
.host { color: #242424; }
.path { color: #5a5a5a; }
.install { margin-left: 20px; }
.fav-star { margin-left: 18.500px; }
.tools { display: flex; align-items: center; }
.puzzle { margin-left: 24px; margin-top: -3px; }
.tools .vr { margin: 0 23px 0 20px; }
.avatar { width: 40px; height: 40px; margin: 0 22px 0 14px; border-radius: 50%; background: #e9e9e9; display: flex; align-items: center; justify-content: center; }
.dots { margin-left: 1.500px; }

.bookbar { height: 50px; display: flex; align-items: center; }
.grid { margin: 1px 19px 0 23.500px; }
.marks { display: flex; margin-left: 17.500px; flex: none; }
.mark { display: flex; align-items: center; gap: 7.500px; flex: none; }
.mark span, .all { line-height: 22px; }
.more { margin-left: 2.500px; }
.second.vr { margin: 0 20px 0 22px; }
.all { margin-left: 9.500px; }

.rainbow { height: 3px; flex: none; background: linear-gradient(90deg, #ff4b4b, #fffd80); }
.app { flex: 1; display: flex; min-height: 0; font-family: "Noto Sans CJK SC", "Noto Sans CJK JP", sans-serif; color: #fafafa; }
.sidebar { width: 320px; background: #262730; box-sizing: border-box; padding: 28px 33px 0; flex: none; }
.collapse { margin-left: 225px; }
h3 { margin: 69px 0 0 4px; display: flex; align-items: center; height: 30px; font-size: 22px; font-weight: 700; line-height: 30px; gap: 9px; }
h3 span { padding-bottom: 3px; }
label { display: block; font-size: 15.400px; line-height: 24px; height: 24px; margin-top: 23px; }
label.second { margin-top: 23px; }
.field { height: 50px; margin-top: 8px; border-radius: 10px; background: #0e1117; padding-left: 16px; font-size: 17.500px; line-height: 49px; }
button { display: flex; align-items: center; height: 50px; box-sizing: border-box; border-radius: 10px; border: 1px solid #53545d; background: #2b2c36; color: #fafafa; font-family: inherit; font-size: 17.500px; line-height: 28px; padding: 0 0 1px 19px; gap: 8px; }
button span { padding-bottom: 1px; margin-left: -.500px; }
.fetch { width: 220px; margin-top: 20px; border-color: #ff4b4b; color: #ff4b4b; }
hr { border: 0; height: 1px; background: #51525b; margin: 60px 0 40px; }
.logout { width: 122px; }
.content { flex: 1; display: flex; flex-direction: column; background: #0e1117; min-width: 0; }
.actions { display: flex; align-items: center; height: 70px; justify-content: flex-end; font-size: 15.400px; padding-right: 37.500px; flex: none; }
.actions span { padding-bottom: 1px; }
.a-star { margin-left: 25px; }
.a-pen { margin-left: 24px; }
.a-git { margin-left: 25px; }
.a-dots { margin-left: 30px; }
h1 { margin: 68px 0 0 110px; display: flex; align-items: center; height: 70px; font-size: 49.500px; line-height: 70px; font-weight: 700; gap: 21.500px; -webkit-text-stroke: .600px #fafafa; }
h1 span { padding-bottom: 3px; }
.alert { margin: 20px 100px 0; height: 70px; border-radius: 10px; background: #3e3815; color: #ffffc2; font-size: 17.500px; line-height: 68px; padding-left: 20px; flex: none; }
.manage { margin-top: auto; height: 56px; display: flex; align-items: center; justify-content: flex-end; gap: 23px; padding-right: 29.500px; font-size: 15.400px; }
.manage span { padding-bottom: 1px; }

.taskbar { height: 60px; box-sizing: border-box; border-top: 1px solid #474747; background: #202020; display: flex; align-items: center; color: #fff; padding-bottom: 1px; flex: none; }
.weather { display: flex; align-items: center; width: 529.500px; padding-left: 25px; gap: 9px; box-sizing: border-box; flex: none; }
.lines { display: flex; flex-direction: column; line-height: 20px; padding-bottom: 1px; }
.left { align-items: flex-start; }
.mid { align-items: center; }
.right { align-items: flex-end; }
.dim { color: #c0c0c0; }
.center { display: flex; align-items: center; flex: none; }
.search { width: 275px; height: 40px; margin-left: 17px; border-radius: 20px; background: #3f3f3f; border: 1px solid #4d4d4d; border-top-color: #626262; box-sizing: border-box; display: flex; align-items: center; padding-left: 14px; font-size: 16.500px; color: #cfcfcf; }
.search span { margin-left: 12px; line-height: 24px; }
.plant { margin-left: 119px; }
.apps { display: flex; gap: 5px; margin-left: 4.800px; }
.task { width: 50px; height: 50px; border: 1px solid transparent; border-radius: 6px; box-sizing: border-box; display: flex; align-items: center; justify-content: center; position: relative; }
.focused { background: #2d2d2d; border-color: #3a3a3a; }
.pill { position: absolute; bottom: 0; left: 20px; width: 8px; height: 4px; border-radius: 2px; background: #9b9b9b; }
.focused .pill { left: 14px; width: 20px; background: #0a84f5; }
.tray { display: flex; align-items: center; margin-left: auto; padding-right: 25px; }
.t-up { margin-right: 26px; }
.lang { margin-right: 22.500px; }
.t-wifi { margin-right: 10px; }
.t-vol { margin-right: 10px; }
.clock { margin-left: 20px; }
.t-bell { margin-left: 11px; }
</style>
